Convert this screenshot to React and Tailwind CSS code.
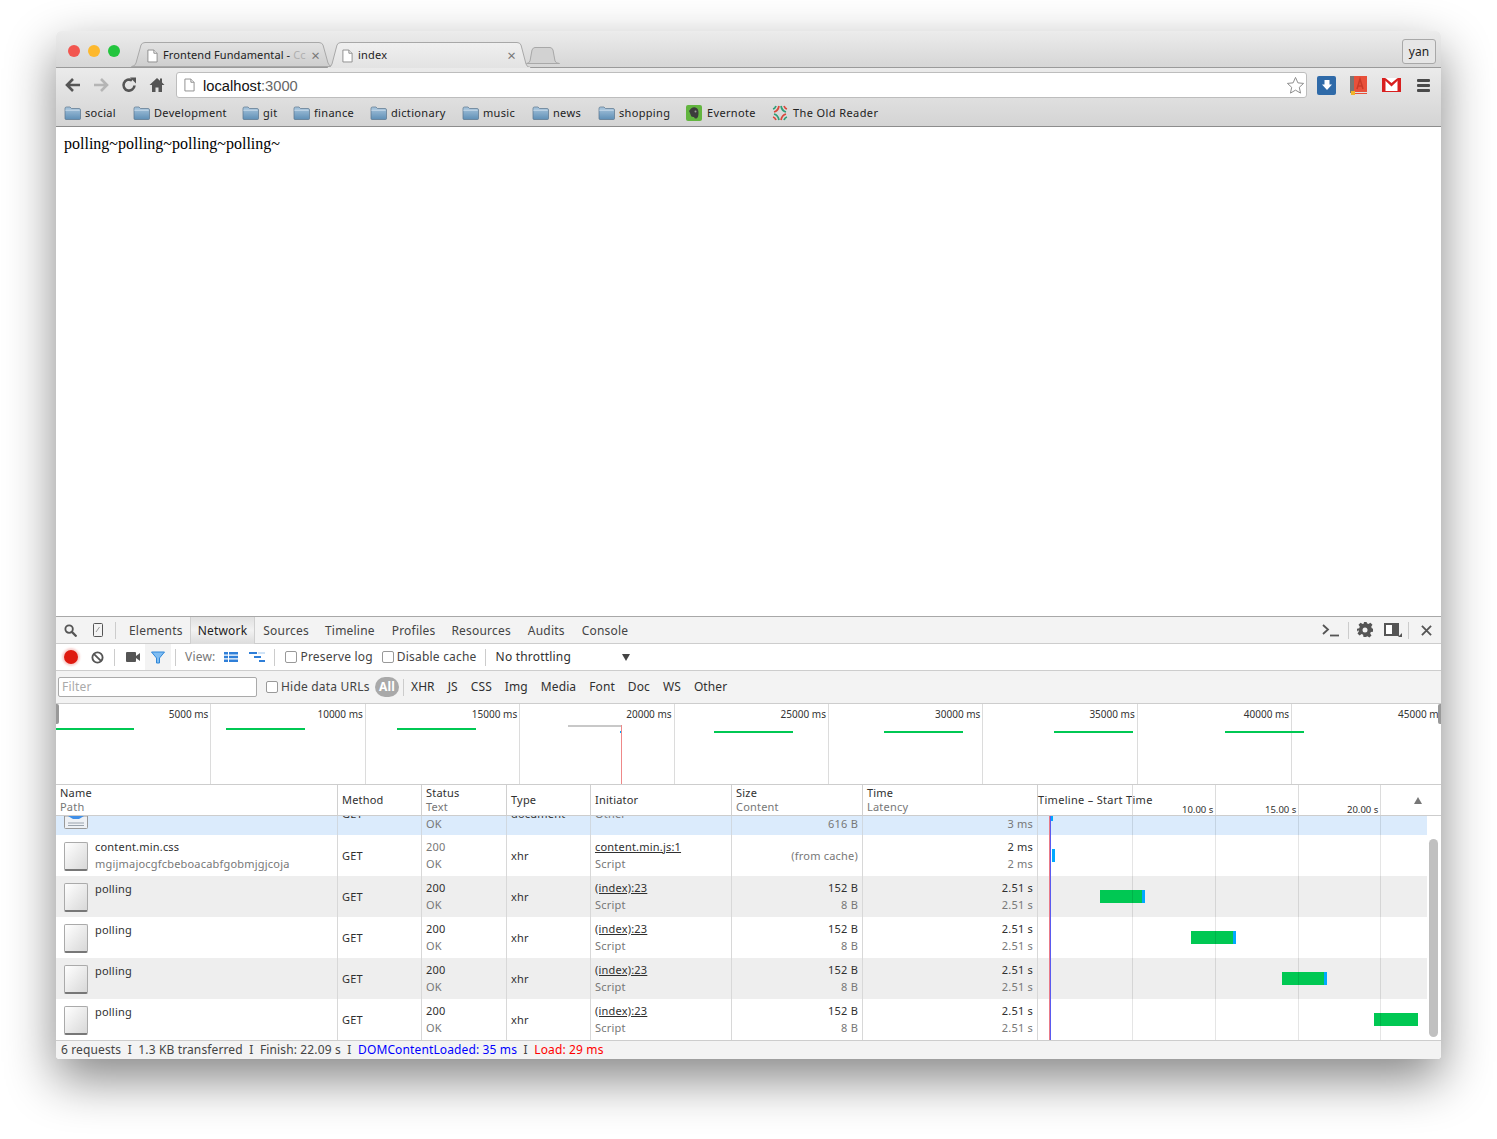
import React from 'react'

const font = "font-['Noto_Sans','DejaVu_Sans',sans-serif] tracking-[.2px]"

function PageIcon({ className }) {
  return (
    <svg viewBox="0 0 12 14" className={className}>
      <path d="M1 .5h6.500L11 4v9.500H1z" fill="#fff" stroke="#8a8a8a" />
      <path d="M7.500 .5V4H11" fill="#eee" stroke="#8a8a8a" />
    </svg>
  )
}

function Folder() {
  return (
    <svg viewBox="0 0 17 14" className="w-[17px] h-[14px] shrink-0">
      <defs>
        <linearGradient id="fold" x1="0" y1="0" x2="0" y2="1">
          <stop offset="0" stopColor="#a9c6dd" />
          <stop offset="1" stopColor="#5f8fb6" />
        </linearGradient>
      </defs>
      <path d="M1 2.500Q1 1 2.500 1h3.500l1.500 1.500h7.500q1.500 0 1.500 1.500v8.500q0 1-1 1H2q-1 0-1-1z" fill="url(#fold)" stroke="#59748c" strokeWidth=".7" />
      <path d="M1.300 4.200h14.400" stroke="#d7e6f1" strokeWidth=".8" />
    </svg>
  )
}

function Bookmark({ label, width }) {
  return (
    <div className="flex items-center gap-[4px]" style={{ width }}>
      <Folder />
      <span className="text-[11px] tracking-[.32px] text-[#222] whitespace-nowrap">{label}</span>
    </div>
  )
}

function Tab1() {
  return (
    <div className="relative w-[202px] h-[25px] flex items-center pl-[16px] pr-[13px] gap-[5px] pt-[2px]">
      <svg viewBox="0 0 202 25" className="absolute inset-0 w-full h-full">
        <defs>
          <linearGradient id="tabOff" x1="0" y1="0" x2="0" y2="1">
            <stop offset="0" stopColor="#e2e2e2" />
            <stop offset="1" stopColor="#cecece" />
          </linearGradient>
        </defs>
        <path d="M.5 24.500Q4 24.500 5 21L10 3Q11 .5 14 .5H188Q191 .5 192 3L197 21Q198 24.500 201.500 24.500z" fill="url(#tabOff)" stroke="#a8a8a8" />
      </svg>
      <PageIcon className="relative w-[11px] h-[14px] shrink-0" />
      <span className="relative flex-1 text-[11px] tracking-[.1px] text-[#222] whitespace-nowrap overflow-hidden">Frontend Fundamental - <span className="text-[#b0b0b0]">Cc</span></span>
      <span className="relative text-[#777] text-[15px] leading-none">×</span>
    </div>
  )
}

function Tab2() {
  return (
    <div className="relative z-10 -ml-[6px] -mb-px w-[204px] h-[26px] flex items-center pl-[15px] pr-[15px] gap-[5px] pt-[1px]">
      <svg viewBox="0 0 204 26" className="absolute inset-0 w-full h-full">
        <defs>
          <linearGradient id="tabOn" x1="0" y1="0" x2="0" y2="1">
            <stop offset="0" stopColor="#f0f0f0" />
            <stop offset="1" stopColor="#e3e3e3" />
          </linearGradient>
        </defs>
        <path d="M.5 25.500Q4 25.500 5 22L10 3Q11 .5 14 .5H190Q193 .5 194 3L199 22Q200 25.500 203.500 25.500z" fill="url(#tabOn)" stroke="#a8a8a8" />
        <path d="M1 25.500H203" stroke="#e3e3e3" />
      </svg>
      <PageIcon className="relative w-[11px] h-[14px] shrink-0" />
      <span className="relative flex-1 text-[11px] text-[#222] whitespace-nowrap overflow-hidden">index</span>
      <span className="relative text-[#777] text-[15px] leading-none">×</span>
    </div>
  )
}

const rows = [
  { name: 'polling', bar: 62, blue: true, shade: true },
  { name: 'polling', bar: 153, blue: true, shade: false },
  { name: 'polling', bar: 244, blue: true, shade: true },
  { name: 'polling', bar: 336, blue: false, shade: false },
]

const cols = 'grid grid-cols-[281px_84px_85px_84px_141px_131px_175px_1fr]'

function Row({ name, sub, shade, bar, blue }) {
  return (
    <div className={`${cols} h-[41px] text-[11px] ${shade ? 'bg-[#eeeeee]' : 'bg-white'}`}>
      <div className={`flex pl-[8px] ${sub ? 'pt-[3px]' : 'pt-[4px]'} gap-[7px] overflow-hidden`}>
        <div className={`w-[24px] h-[29px] ${sub ? 'mt-[4px]' : 'mt-[3px]'} border border-[#aaa] border-b-2 border-b-[#777] rounded-[2px] bg-gradient-to-br from-white to-[#d8d8d8] shrink-0`}></div>
        <div className="leading-[17px]">
          <div className="text-[#303030]">{name}</div>
          {sub && <div className="text-[#777]">{sub}</div>}
        </div>
      </div>
      <div className="border-l border-[#d8d8d8] pl-[4px] pt-[2px] flex items-center text-[#303030]">GET</div>
      <div className="border-l border-[#d8d8d8] pl-[4px] pb-[2px] flex flex-col justify-center leading-[17px]">
        <span className={sub ? 'text-[#777]' : 'text-[#303030]'}>200</span>
        <span className="text-[#777]">OK</span>
      </div>
      <div className="border-l border-[#d8d8d8] pl-[4px] pt-[2px] flex items-center text-[#303030]">xhr</div>
      <div className="border-l border-[#d8d8d8] pl-[4px] pb-[2px] flex flex-col justify-center leading-[17px]">
        <span className="text-[#303030] underline">{sub ? 'content.min.js:1' : '(index):23'}</span>
        <span className="text-[#777]">Script</span>
      </div>
      <div className="border-l border-[#d8d8d8] pr-[4px] pb-[2px] flex flex-col justify-center items-end leading-[17px]">
        {sub ? <span className="text-[#777] pt-[2px]">(from cache)</span> : <><span className="text-[#303030]">152 B</span><span className="text-[#777]">8 B</span></>}
      </div>
      <div className="border-l border-[#d8d8d8] pr-[4px] pb-[2px] flex flex-col justify-center items-end leading-[17px]">
        <span className="text-[#303030]">{sub ? '2 ms' : '2.51 s'}</span>
        <span className="text-[#777]">{sub ? '2 ms' : '2.51 s'}</span>
      </div>
      <div className="border-l border-[#d8d8d8] relative">
        {sub ? (
          <div className="absolute left-[14px] top-[14px] w-[3px] h-[13px] bg-[#00a9ff]"></div>
        ) : (
          <div className="absolute top-[14px] h-[13px] flex" style={{ left: bar }}>
            <div className={`${blue ? 'w-[42px]' : 'w-[44px]'} bg-[#00c853]`}></div>
            {blue && <div className="w-[3px] bg-[#00a9ff]"></div>}
          </div>
        )}
      </div>
    </div>
  )
}

export default function App() {
  const ticks = ['5000 ms', '10000 ms', '15000 ms', '20000 ms', '25000 ms', '30000 ms', '35000 ms', '40000 ms']
  const green = [[0, 78, 24], [170, 79, 24], [341, 79, 24], null, [658, 79, 27], [828, 79, 27], [998, 79, 27], [1169, 79, 27]]
  return (
    <div className={`${font} w-[1497px] h-[1139px] bg-white overflow-hidden pt-[31px] pl-[56px]`}>
      <div className="w-[1385px] h-[1028px] flex flex-col rounded-t-[5px] rounded-b-[4px] overflow-hidden shadow-[0_20px_50px_rgba(0,0,0,0.48)]">
        <div className="h-[37px] flex items-end bg-gradient-to-b from-[#ececec] to-[#d6d6d6] border-b border-[#9a9a9a] relative pl-[75px]">
          <div className="absolute left-[12px] top-[14px] flex gap-[8px]">
            <div className="w-[12px] h-[12px] rounded-full bg-[#f25650]"></div>
            <div className="w-[12px] h-[12px] rounded-full bg-[#fdb82d]"></div>
            <div className="w-[12px] h-[12px] rounded-full bg-[#23c53e]"></div>
          </div>
          <Tab1 />
          <Tab2 />
          <svg viewBox="0 0 34 17" className="w-[34px] h-[17px] -ml-[5px] mb-[3px]"><path d="M.5 16.500Q3 16.500 4 14L6 3Q7 .5 9 .5H24Q26 .5 27 3L29 14Q30 16.500 33.500 16.500z" fill="#d2d2d2" stroke="#a8a8a8" /></svg>
          <div className="absolute right-[5px] top-[8px] w-[34px] h-[25px] rounded-[3px] border border-[#a8a8a8] bg-[#e6e6e6] flex items-center justify-center text-[12px] tracking-normal text-[#222]">yan</div>
        </div>
        <div className="h-[59px] bg-gradient-to-b from-[#ebebeb] to-[#d4d4d4] border-b border-[#8c8c8c] flex flex-col">
          <div className="h-[34px] flex items-center pl-[9px]">
            <svg viewBox="0 0 16 14" className="w-[16px] h-[14px]"><path d="M8 1 2 7l6 6M2.500 7H15" fill="none" stroke="#555" strokeWidth="2.600" /></svg>
            <svg viewBox="0 0 16 14" className="w-[16px] h-[14px] ml-[12px]"><path d="m8 1 6 6-6 6M13.500 7H1" fill="none" stroke="#b5b5b5" strokeWidth="2.600" /></svg>
            <svg viewBox="0 0 16 16" className="w-[16px] h-[16px] ml-[12px]"><path d="M13.500 8.500A5.500 5.500 0 1 1 11 3.500" fill="none" stroke="#555" strokeWidth="2.600" /><path d="M9 .5h6v6z" fill="#555" /></svg>
            <svg viewBox="0 0 16 16" className="w-[16px] h-[16px] ml-[12px]"><path d="M8 1 .5 8H3v7h3.500v-4.500h3V15H13V8h2.500L13 5.600V1.500h-2v2.200z" fill="#555" /></svg>
            <div className="w-[1131px] h-[26px] ml-[11px] bg-white rounded-[3px] border border-[#bdbdbd] flex items-center pl-[7px] relative">
              <PageIcon className="w-[11px] h-[14px]" />
              <span className="ml-[8px] pt-[2px] text-[14.700px] tracking-normal text-[#111] font-['Liberation_Sans',sans-serif]">localhost<span className="text-[#666]">:3000</span></span>
              <svg viewBox="0 0 20 20" className="absolute right-[1px] top-[3px] w-[19px] h-[19px]"><path d="m10 1.500 2.500 5.700 6 .6-4.500 4.100 1.300 6.100-5.300-3.100-5.300 3.100L6 11.900 1.500 7.800l6-.6z" fill="#fff" stroke="#888" strokeWidth="1" /></svg>
            </div>
            <div className="w-[19px] h-[19px] ml-[10px] rounded-[2px] bg-[#2f6aa8] flex items-center justify-center">
              <svg viewBox="0 0 12 12" className="w-[12px] h-[12px]"><path d="M3.500 1h5v4.500H11L6 11 1 5.500h2.500z" fill="#fff" /></svg>
            </div>
            <svg viewBox="0 0 17 19" className="w-[17px] h-[19px] ml-[14px]">
              <rect x="0" y="0" width="4" height="17" fill="#777" />
              <rect x="4" y="0" width="13" height="16" fill="#e8503a" />
              <rect x="4" y="17" width="13" height="1" fill="#e8503a" />
              <path d="m7 13 3-10 3 10M8 10h4" fill="none" stroke="#c93a28" strokeWidth="1.500" />
              <rect x="1" y="15" width="4" height="4" fill="#f0b429" />
            </svg>
            <svg viewBox="0 0 19 14" className="w-[19px] h-[14px] ml-[15px]">
              <rect width="19" height="14" fill="#fff" />
              <path d="M0 0h3.500v14H0zM15.500 0H19v14h-3.500zM0 13h19v1H0z" fill="#d81f1f" />
              <path d="M1 .5h3L9.500 5 15 .5h3L9.500 8.500z" fill="#d81f1f" />
            </svg>
            <div className="w-[13px] ml-[16px] flex flex-col gap-[2px]">
              <div className="h-[3px] rounded-[1px] bg-[#4a4a4a]"></div>
              <div className="h-[3px] rounded-[1px] bg-[#4a4a4a]"></div>
              <div className="h-[3px] rounded-[1px] bg-[#4a4a4a]"></div>
            </div>
          </div>
          <div className="flex-1 flex items-center pl-[8px] pb-[2px]">
            <Bookmark label="social" width={69} />
            <Bookmark label="Development" width={109} />
            <Bookmark label="git" width={51} />
            <Bookmark label="finance" width={77} />
            <Bookmark label="dictionary" width={92} />
            <Bookmark label="music" width={70} />
            <Bookmark label="news" width={66} />
            <Bookmark label="shopping" width={88} />
            <div className="flex items-center gap-[5px] w-[86px]">
              <svg viewBox="0 0 16 16" className="w-[16px] h-[16px]">
                <rect width="16" height="16" rx="2" fill="#62b53f" />
                <path d="M5 3.500Q8 1.500 10.500 3 12.500 4 12.500 8q0 4.500-2 5.500-2 .5-2.500-1.500-3 .5-3.500-2.500-.5-2-1.500-3.500z" fill="#3c3c3c" />
                <circle cx="9.500" cy="6.500" r="1" fill="#9c9c9c" />
              </svg>
              <span className="text-[11px] tracking-[.35px] text-[#222]">Evernote</span>
            </div>
            <div className="flex items-center gap-[5px]">
              <svg viewBox="0 0 16 16" className="w-[16px] h-[16px]" fill="none" strokeWidth="1.800">
                <path d="M2 7Q6 6 7 1" stroke="#d9483b" />
                <path d="M1 4Q3 3.500 4 1" stroke="#2f9e78" />
                <path d="M9 1Q10 6 14 7" stroke="#2f9e78" />
                <path d="M12 1Q13 3.500 15 4" stroke="#d9483b" />
                <path d="M2 9Q6 10 7 15" stroke="#2f9e78" />
                <path d="M1 12Q3 12.500 4 15" stroke="#d9483b" />
                <path d="M9 15Q10 10 14 9" stroke="#d9483b" />
                <path d="M12 15Q13 12.500 15 12" stroke="#2f9e78" />
              </svg>
              <span className="text-[11px] tracking-[.4px] text-[#222]">The Old Reader</span>
            </div>
          </div>
        </div>
        <div className="h-[489px] bg-white pl-[8px] pt-[7px] text-[16px] leading-[20px] tracking-normal text-black font-['Liberation_Serif',serif]">polling~polling~polling~polling~</div>
        <div className="flex-1 flex flex-col border-t border-[#a8a8a8] bg-white min-h-0 text-[#303030]">
          <div className="h-[27px] bg-[#f3f3f3] border-b border-[#cdcdcd] flex items-center pl-[8px] text-[12px] text-[#444] relative">
            <svg viewBox="0 0 14 14" className="w-[13px] h-[13px]"><circle cx="5.500" cy="5.500" r="4" fill="none" stroke="#555" strokeWidth="2" /><path d="m8.500 8.500 5 5" stroke="#555" strokeWidth="2.400" /></svg>
            <svg viewBox="0 0 10 14" className="w-[10px] h-[14px] ml-[16px]"><rect x=".5" y=".5" width="9" height="13" rx="1" fill="none" stroke="#555" /><path d="M6.500 4 3 9" stroke="#999" /></svg>
            <div className="w-px h-[17px] bg-[#ccc] ml-[12px]"></div>
            <div className="flex ml-[5px] h-full items-center pt-[1px]">
              <span className="pl-[8px] pr-[7px]">Elements</span>
              <span className="px-[7px] -mt-[1px] h-[27px] flex items-center pt-[1px] text-[#222] border-x border-[#cfcfcf] bg-gradient-to-b from-[#e0e0e0] via-[#f2f2f2] to-[#dcdcdc]">Network</span>
              <span className="px-[8px]">Sources</span>
              <span className="pl-[8px] pr-[9px]">Timeline</span>
              <span className="px-[8px]">Profiles</span>
              <span className="pl-[8px] pr-[9px]">Resources</span>
              <span className="pl-[8px] pr-[9px]">Audits</span>
              <span className="px-[8px]">Console</span>
            </div>
            <div className="ml-auto flex items-center pr-[9px]">
              <svg viewBox="0 0 18 14" className="w-[18px] h-[14px]"><path d="m1 2 5 4.500L1 11" fill="none" stroke="#555" strokeWidth="1.800" /><path d="M8 12.500h9" stroke="#555" strokeWidth="1.800" /></svg>
              <div className="w-px h-[17px] bg-[#ccc] ml-[8px] mr-[8px]"></div>
              <svg viewBox="0 0 16 16" className="w-[16px] h-[16px]"><path d="M6.500 0h3l.4 2.300 1.500.7 2-1.300 2.100 2.100-1.300 2 .6 1.500L16 7.700v3l-2.200.4-.6 1.500 1.300 2-2.100 2-2-1.300-1.500.6L9.500 16h-3l-.4-2.300-1.500-.6-2 1.300-2.100-2 1.300-2-.6-1.500L0 10.700v-3l2.200-.4.600-1.500-1.300-2 2.100-2.100 2 1.300 1.500-.7z" fill="#555" transform="translate(0 -1)" /><circle cx="8" cy="8" r="2.500" fill="#f3f3f3" /></svg>
              <svg viewBox="0 0 18 14" className="w-[18px] h-[14px] ml-[11px]"><rect x="1" y="1" width="13" height="11" fill="#fff" stroke="#555" strokeWidth="2" /><rect x="8" y="1" width="6" height="11" fill="#555" /><path d="M18 10v4h-4z" fill="#555" /></svg>
              <div className="w-px h-[17px] bg-[#ccc] ml-[6px] mr-[10px]"></div>
              <svg viewBox="0 0 12 12" className="w-[11px] h-[11px] ml-[2px]"><path d="m1 1 10 10M11 1 1 11" stroke="#555" strokeWidth="2" /></svg>
            </div>
          </div>
          <div className="h-[27px] bg-white border-b border-[#cdcdcd] flex items-center pl-[8px] text-[12px]">
            <div className="w-[14px] h-[14px] rounded-full bg-[#de1a10] shadow-[0_0_2px_2px_rgba(222,26,16,0.2)]"></div>
            <svg viewBox="0 0 14 14" className="w-[13px] h-[13px] ml-[13px]"><circle cx="7" cy="7" r="5.500" fill="none" stroke="#555" strokeWidth="2" /><path d="m3 3 8 8" stroke="#555" strokeWidth="2" /></svg>
            <div className="w-px h-[17px] bg-[#ccc] ml-[10px]"></div>
            <svg viewBox="0 0 14 10" className="w-[14px] h-[10px] ml-[11px]"><rect width="10" height="10" rx="1" fill="#555" /><path d="M10 4 14 1v8l-4-3z" fill="#555" /></svg>
            <div className="w-[26px] h-full bg-[#f3f3f3] ml-[5px] flex items-center justify-center">
              <svg viewBox="0 0 14 13" className="w-[14px] h-[13px]"><path d="M.5 1h13L8.500 7v5h-3V7z" fill="#7fbdf2" stroke="#2f86d8" /></svg>
            </div>
            <div className="w-px h-[17px] bg-[#ccc] ml-[4px]"></div>
            <span className="ml-[9px] text-[#777]">View:</span>
            <svg viewBox="0 0 14 10" className="w-[14px] h-[10px] ml-[9px]"><path d="M0 0h4v2.500H0zM5 0h9v2.500H5zM0 3.700h4v2.500H0zM5 3.700h9v2.500H5zM0 7.400h4v2.500H0zM5 7.400h9v2.500H5z" fill="#2f7fd8" /></svg>
            <svg viewBox="0 0 16 10" className="w-[16px] h-[10px] ml-[11px]"><path d="M0 0h8v2H0zM5 4h7v2H5zM10 8h6v2h-6z" fill="#2f7fd8" /><path d="M9 0h7v2H9z" fill="#cfe3f7" /></svg>
            <div className="w-px h-[17px] bg-[#ccc] ml-[9px]"></div>
            <div className="w-[12px] h-[12px] ml-[10px] rounded-[2px] border border-[#999] bg-white"></div>
            <span className="ml-[3px] text-[#444]">Preserve log</span>
            <div className="w-[12px] h-[12px] ml-[9px] rounded-[2px] border border-[#999] bg-white"></div>
            <span className="ml-[3px] text-[#444]">Disable cache</span>
            <div className="w-px h-[17px] bg-[#ccc] ml-[8px]"></div>
            <span className="ml-[10px] text-[#303030] w-[126px]">No throttling</span>
            <svg viewBox="0 0 8 7" className="w-[8px] h-[7px]"><path d="M0 0h8L4 7z" fill="#444" /></svg>
          </div>
          <div className="h-[33px] bg-[#f3f3f3] border-b border-[#cdcdcd] flex items-center pl-[2px] text-[12px] relative">
            <div className="w-[199px] h-[20px] bg-white border border-[#aaa] rounded-[2px] pl-[3px] text-[#aaa] leading-[18px]">Filter</div>
            <div className="w-[12px] h-[12px] ml-[9px] rounded-[2px] border border-[#999] bg-white"></div>
            <span className="ml-[3px] text-[#444] w-[94px] whitespace-nowrap">Hide data URLs</span>
            <span className="w-[24px] h-[20px] rounded-[10px] bg-[#a9a9a9] text-white font-bold flex items-center justify-center">All</span>
            <div className="w-px h-[17px] bg-[#ccc] ml-[4px]"></div>
            <div className="ml-[7px] flex gap-[13px] tracking-[.1px] text-[#303030]">
              <span>XHR</span><span>JS</span><span>CSS</span><span>Img</span><span>Media</span><span>Font</span><span>Doc</span><span>WS</span><span>Other</span>
            </div>
          </div>
          <div className="h-[81px] border-b border-[#cdcdcd] bg-white flex relative overflow-hidden tracking-normal pl-[1px]">
            {ticks.map(t => (
              <div key={t} className="w-[154.400px] h-full shrink-0 border-r border-[#dcdcdc] relative">
                <span className="absolute right-[2px] top-[3px] text-[10px] text-[#333] whitespace-nowrap">{t}</span>
              </div>
            ))}
            <span className="absolute left-[1342px] top-[3px] text-[10px] text-[#333] whitespace-nowrap">45000 ms</span>
            {green.map((g, i) => g && <div key={i} className="absolute h-[2px] bg-[#00c853]" style={{ left: g[0], width: g[1], top: g[2] }}></div>)}
            <div className="absolute left-[512px] top-[21px] w-[54px] h-[2px] bg-[#c8c8c8]"></div>
            <div className="absolute left-[564px] top-[27px] w-[1px] h-[2px] bg-[#00a9ff]"></div>
            <div className="absolute left-[565px] top-[21px] w-px h-[60px] bg-[#e88]"></div>
            <div className="absolute left-0 top-0 w-[3px] h-[20px] rounded-r-[2px] bg-[#999]"></div>
            <div className="absolute right-0 top-0 w-[3px] h-[20px] rounded-l-[2px] bg-[#999]"></div>
          </div>
          <div className={`${cols} h-[31px] border-b border-[#cdcdcd] text-[11px] leading-[14px] bg-white`}>
            <div className="pl-[4px] flex flex-col justify-center"><span>Name</span><span className="text-[#777]">Path</span></div>
            <div className="border-l border-[#d0d0d0] pl-[4px] flex items-center">Method</div>
            <div className="border-l border-[#d0d0d0] pl-[4px] flex flex-col justify-center"><span>Status</span><span className="text-[#777]">Text</span></div>
            <div className="border-l border-[#d0d0d0] pl-[4px] flex items-center">Type</div>
            <div className="border-l border-[#d0d0d0] pl-[4px] flex items-center">Initiator</div>
            <div className="border-l border-[#d0d0d0] pl-[4px] flex flex-col justify-center"><span>Size</span><span className="text-[#777]">Content</span></div>
            <div className="border-l border-[#d0d0d0] pl-[4px] flex flex-col justify-center"><span>Time</span><span className="text-[#777]">Latency</span></div>
            <div className="border-l border-[#d0d0d0] relative flex items-center tracking-[.3px]">
              <span>Timeline – Start Time</span>
              {[94, 177, 260, 342].map(x => <div key={x} className="absolute top-0 bottom-0 w-px bg-[#dcdcdc]" style={{ left: x }}></div>)}
              <span className="absolute left-[144px] -bottom-[2px] text-[9.500px] tracking-normal">10.00 s</span>
              <span className="absolute left-[227px] -bottom-[2px] text-[9.500px] tracking-normal">15.00 s</span>
              <span className="absolute left-[309px] -bottom-[2px] text-[9.500px] tracking-normal">20.00 s</span>
              <svg viewBox="0 0 8 7" className="absolute right-[19px] top-[12px] w-[8px] h-[7px]"><path d="M4 0l4 7H0z" fill="#777" /></svg>
            </div>
          </div>
          <div className="flex-1 relative overflow-hidden">
            <div className="mr-[14px]">
              <div className={`${cols} h-[19px] bg-[#dbebfc] text-[11px] text-[#777]`}>
                <div className="pl-[8px] overflow-hidden">
                  <svg viewBox="0 0 24 13" className="w-[24px] h-[13px]">
                    <path d="M.5 0v11.500q0 1 1 1h21q1 0 1-1V0z" fill="#eef1f5" stroke="#999" />
                    <path d="M4 0l5 3h6l5-3z" fill="#3f8fe8" />
                    <path d="M4 7h16M4 9.500h16" stroke="#9aa3ad" />
                  </svg>
                </div>
                <div className="border-l border-[#d0d8e0] pl-[4px] overflow-hidden text-[#303030] leading-[16px]"><div className="-mt-[10px]">GET</div></div>
                <div className="border-l border-[#d0d8e0] pl-[4px] pb-[4px] flex items-center">OK</div>
                <div className="border-l border-[#d0d8e0] pl-[4px] overflow-hidden text-[#303030] leading-[16px]"><div className="-mt-[10px]">document</div></div>
                <div className="border-l border-[#d0d8e0] pl-[4px] overflow-hidden leading-[16px]"><div className="-mt-[10px]">Other</div></div>
                <div className="border-l border-[#d0d8e0] pr-[4px] pb-[4px] flex items-center justify-end">616 B</div>
                <div className="border-l border-[#d0d8e0] pr-[4px] pb-[4px] flex items-center justify-end">3 ms</div>
                <div className="border-l border-[#d0d8e0] relative"><div className="absolute left-[12px] w-[3px] h-[5px] bg-[#00a9ff]"></div></div>
              </div>
              <Row name="content.min.css" sub="mgijmajocgfcbeboacabfgobmjgjcoja" />
              {rows.map((r, i) => <Row key={i} {...r} />)}
            </div>
            {[1132, 1215, 1298, 1380].map(x => <div key={x} className="absolute top-0 bottom-0 w-px bg-[#000]/10" style={{ left: x - 56 }}></div>)}
            <div className="absolute top-0 bottom-0 left-[993px] w-px bg-[#e87a8a]"></div>
            <div className="absolute top-0 bottom-0 left-[994px] w-px bg-[#5a5af0]"></div>
            <div className="absolute right-[3px] top-[23px] w-[9px] h-[198px] rounded-full bg-[#c0c0c0]"></div>
          </div>
          <div className="h-[19px] bg-[#f3f3f3] border-t border-[#cdcdcd] flex items-center pl-[5px] text-[12px] tracking-[.13px] text-[#444] whitespace-pre">
            6 requests  I  1.3 KB transferred  I  Finish: 22.09 s  I  <span className="text-[#0000ff]">DOMContentLoaded: 35 ms</span>  I  <span className="text-[#ff0000]">Load: 29 ms</span>
          </div>
        </div>
      </div>
    </div>
  )
}
